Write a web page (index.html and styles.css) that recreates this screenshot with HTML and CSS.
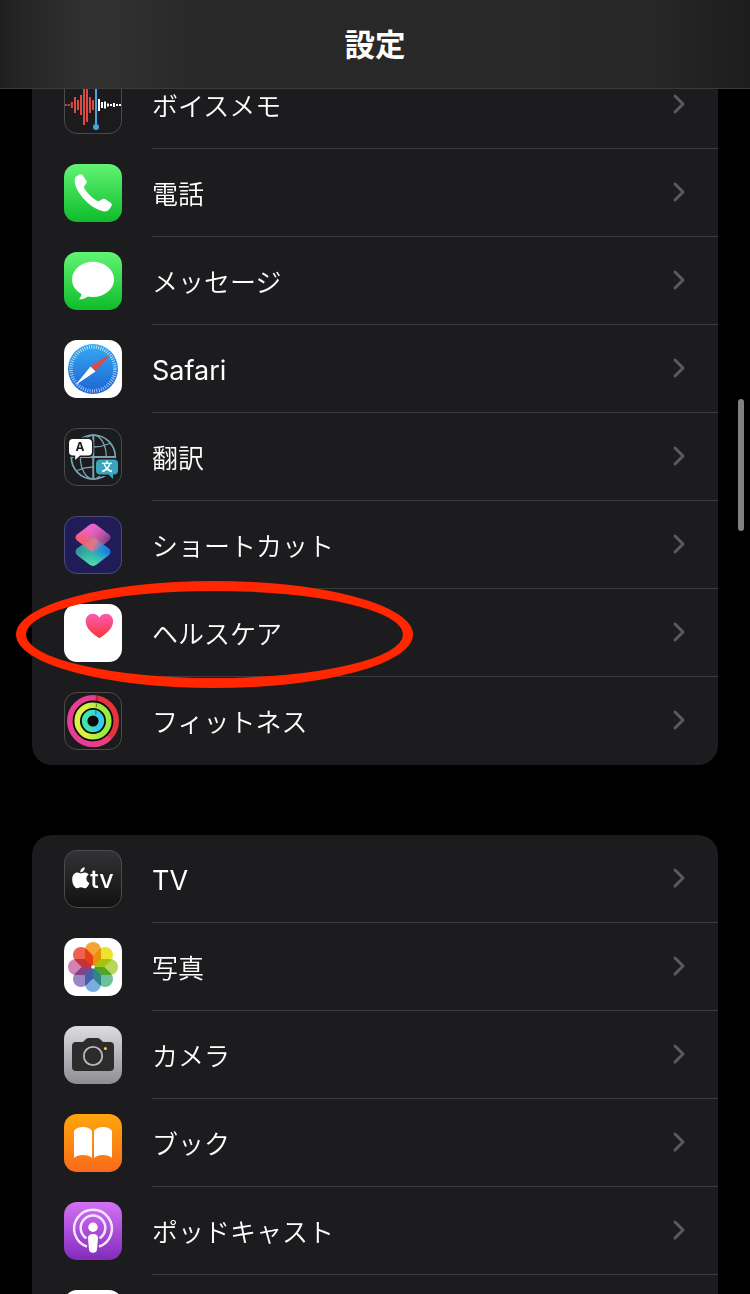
FILE: index.html
```html
<!DOCTYPE html>
<html lang="ja">
<head>
  <meta charset="UTF-8" />
  <title>設定</title>
  <link rel="stylesheet" href="styles.css">
</head>
<body>

  <header class="navbar">
    <h1>設定</h1>
  </header>

  <main class="content">
    <!-- System apps -->
    <ul class="group">
      <li class="row">
        <svg class="icon" viewBox="0 0 58 58">
          <rect width="58" height="58" rx="13" fill="#1b1b1d" />
          <g stroke="#d94b43" stroke-width="2">
            <path d="M1.6 28v2M4.7 28v2M7.9 26v6M11 21v16M14 24v10M17 19v20M20 9v40M23 12v34M26 21v16M29 24v10" />
          </g>
          <path d="M35 23v12M38 26v6M41 25.500v7M44 27.500v3M47 28v2M50 27v4M53 28v2M56 28v2" stroke="#fff" stroke-width="2" />
          <path d="M32 4v47" stroke="#4aa3dc" stroke-width="2" />
          <circle cx="32" cy="51" r="3" fill="#4aa3dc" />
          <rect class="edge" x=".5" y=".5" width="57" height="57" rx="12.500" />
        </svg>
        <div class="cell"><span>ボイスメモ</span><svg class="chevron" viewBox="0 0 14 22"><path d="M3 3l8 8-8 8" /></svg></div>
      </li>
      <li class="row">
        <svg class="icon" viewBox="0 0 58 58">
          <defs>
            <linearGradient id="green" x2="0" y2="1">
              <stop offset="0" stop-color="#62f474" />
              <stop offset="1" stop-color="#0ebc2b" />
            </linearGradient>
          </defs>
          <rect width="58" height="58" rx="13" fill="url(#green)" />
          <path fill="#fff" d="M12 12.500L16 10.300Q17.500 9.800 18.800 11.500L22.500 17Q23.300 18.500 22 20L20.300 22Q19.600 23 20.200 24.200C23 29 27.500 33.500 33 36.800Q34.500 37.600 35.600 36.800L38.500 35Q40 34.200 41.500 35.200L47 39Q48.300 40.200 47.600 41.700L45.500 45Q44 47.600 40.500 47.400C34 47 25 41 19 34C13.500 27.500 10.800 21.500 10.700 16.500Q10.700 13.500 12 12.500Z" />
        </svg>
        <div class="cell"><span>電話</span><svg class="chevron" viewBox="0 0 14 22"><path d="M3 3l8 8-8 8" /></svg></div>
      </li>
      <li class="row">
        <svg class="icon" viewBox="0 0 58 58">
          <rect width="58" height="58" rx="13" fill="url(#green)" />
          <ellipse cx="29" cy="27.400" rx="21" ry="17.600" fill="#fff" />
          <path fill="#fff" d="M17.500 40c.3 3-.7 5.500-2.500 7.300 3.500.4 7.500-1 10-4z" />
        </svg>
        <div class="cell"><span>メッセージ</span><svg class="chevron" viewBox="0 0 14 22"><path d="M3 3l8 8-8 8" /></svg></div>
      </li>
      <li class="row">
        <svg class="icon" viewBox="0 0 58 58">
          <defs>
            <linearGradient id="compass" x2="0" y2="1">
              <stop offset="0" stop-color="#35aaf0" />
              <stop offset="1" stop-color="#1d63d4" />
            </linearGradient>
          </defs>
          <rect width="58" height="58" rx="13" fill="#fff" />
          <circle cx="29" cy="29" r="25" fill="url(#compass)" />
          <circle cx="29" cy="29" r="22" fill="none" stroke="#fff" stroke-opacity=".75" stroke-width="3.500" stroke-dasharray=".8 1.504" />
          <path fill="#dd4a48" d="M46.800 13.500L26.500 26.500l5 5z" />
          <path fill="#fff" d="M11.500 45l15-18.500 5 5z" />
        </svg>
        <div class="cell"><span class="latin">Safari</span><svg class="chevron" viewBox="0 0 14 22"><path d="M3 3l8 8-8 8" /></svg></div>
      </li>
      <li class="row">
        <svg class="icon" viewBox="0 0 58 58">
          <rect width="58" height="58" rx="13" fill="#1a1c1e" />
          <g fill="none" stroke="#7ba3b3" stroke-width="1.700">
            <circle cx="29.300" cy="29" r="22" />
            <ellipse cx="29.300" cy="29" rx="13" ry="22" stroke-width="1.300" />
            <path d="M29.300 7v44M7.300 29h44" stroke-width="2" />
            <path d="M13 15.500q16 7 33 0M13 42.500q16-7 33 0" stroke-width="1.300" />
          </g>
          <path class="cutout" fill="#fff" d="M9 11h15q4 0 4 4v8.500q0 4-4 4h-8l-4.800 4.500v-4.500H9q-4 0-4-4V15q0-4 4-4z" />
          <path class="cutout" fill="#3aa5bd" d="M36 31.500h14q4 0 4 4v7q0 4-4 4h-1v4.500l-4.500-4.500H36q-4 0-4-4v-7q0-4 4-4z" />
          <text class="glyph-a" x="16" y="23.200">A</text>
          <text class="glyph-bun" x="43" y="42.800">文</text>
          <rect class="edge" x=".5" y=".5" width="57" height="57" rx="12.500" />
        </svg>
        <div class="cell"><span>翻訳</span><svg class="chevron" viewBox="0 0 14 22"><path d="M3 3l8 8-8 8" /></svg></div>
      </li>
      <li class="row">
        <svg class="icon" viewBox="0 0 58 58">
          <defs>
            <linearGradient id="layerBottom">
              <stop offset="0" stop-color="#3b8f96" />
              <stop offset=".45" stop-color="#30b5b0" />
              <stop offset="1" stop-color="#1873f0" />
            </linearGradient>
            <linearGradient id="layerGlow" x2="0" y2="1">
              <stop offset=".5" stop-color="#45d8a0" stop-opacity="0" />
              <stop offset="1" stop-color="#55dfa8" />
            </linearGradient>
            <linearGradient id="layerTop" x1="0" y1=".6" x2="1" y2=".4">
              <stop offset="0" stop-color="#fb5c5f" />
              <stop offset=".5" stop-color="#e0609b" />
              <stop offset="1" stop-color="#6a3484" />
            </linearGradient>
            <linearGradient id="layerPink" x2="0" y2="1">
              <stop offset="0" stop-color="#ee64d8" />
              <stop offset=".6" stop-color="#ee64d8" stop-opacity="0" />
            </linearGradient>
            <linearGradient id="layerFold" x1="0" y1=".3" x2="1" y2=".6">
              <stop offset="0" stop-color="#f4626c" />
              <stop offset=".55" stop-color="#d97a8c" />
              <stop offset="1" stop-color="#4a7fd8" />
            </linearGradient>
          </defs>
          <rect width="58" height="58" rx="13" fill="#1f1c58" />
          <path fill="url(#layerTop)" d="M32.500 9l12.500 9.500q3 3 0 6L32.500 34q-3.500 2.500-7 0L13 24.500q-3-3 0-6L25.500 9q3.500-2.500 7 0z" />
          <path fill="url(#layerPink)" d="M32.500 9l12.500 9.500q3 3 0 6L32.500 34q-3.500 2.500-7 0L13 24.500q-3-3 0-6L25.500 9q3.500-2.500 7 0z" />
          <path fill="url(#layerBottom)" d="M32.500 23.500l12.500 9q3 3 0 6.500l-12.500 9.500q-3.500 2.500-7 0L13 39q-3-3.500 0-6.500l12.500-9q3.500-2.500 7 0z" />
          <path fill="url(#layerGlow)" d="M32.500 23.500l12.500 9q3 3 0 6.500l-12.500 9.500q-3.500 2.500-7 0L13 39q-3-3.500 0-6.500l12.500-9q3.500-2.500 7 0z" />
          <path fill="url(#layerFold)" d="M25.500 23.500q3.500-2.500 7 0l6.500 5.200-6.500 5.300q-3.500 2.500-7 0l-6.500-5.300z" />
          <rect class="edge edge-blue" x=".5" y=".5" width="57" height="57" rx="12.500" />
        </svg>
        <div class="cell"><span>ショートカット</span><svg class="chevron" viewBox="0 0 14 22"><path d="M3 3l8 8-8 8" /></svg></div>
      </li>
      <li class="row marked">
        <svg class="icon" viewBox="0 0 58 58">
          <defs>
            <linearGradient id="heart" x2="0" y2="1">
              <stop offset="0" stop-color="#fa5cb0" />
              <stop offset="1" stop-color="#f8353a" />
            </linearGradient>
          </defs>
          <rect width="58" height="58" rx="13" fill="#fff" />
          <path fill="url(#heart)" d="M35.400 34.200C31 31.500 21.700 25.500 21.700 17.300c0-4.300 3-7.500 6.900-7.500 3 0 5.200 1.400 6.800 3.700 1.600-2.300 3.800-3.700 6.800-3.700 3.900 0 6.900 3.200 6.900 7.500 0 8.200-9.300 14.200-13.700 16.900z" />
        </svg>
        <div class="cell"><span>ヘルスケア</span><svg class="chevron" viewBox="0 0 14 22"><path d="M3 3l8 8-8 8" /></svg></div>
        <div class="circle-mark"></div>
      </li>
      <li class="row">
        <svg class="icon" viewBox="0 0 58 58">
          <defs>
            <linearGradient id="ringMove">
              <stop offset=".5" stop-color="#e83d94" />
              <stop offset=".62" stop-color="#e5323f" />
            </linearGradient>
            <linearGradient id="ringExercise">
              <stop offset=".3" stop-color="#d8f23f" />
              <stop offset=".75" stop-color="#97ee3c" />
            </linearGradient>
            <linearGradient id="ringStand">
              <stop offset=".3" stop-color="#3fe5b0" />
              <stop offset=".75" stop-color="#35cdea" />
            </linearGradient>
          </defs>
          <rect width="58" height="58" rx="13" fill="#1b1b1d" />
          <circle cx="29" cy="29" r="26" fill="#0c0809" />
          <g fill="none" stroke-width="5.600">
            <circle cx="29" cy="29" r="23.200" stroke="url(#ringMove)" />
            <path d="M29 52.200a23.200 23.200 0 0 0 16.400-6.800" stroke="#e83d80" />
            <circle cx="29" cy="29" r="15.800" stroke="url(#ringExercise)" />
            <circle cx="29" cy="29" r="8.400" stroke="url(#ringStand)" />
          </g>
          <path d="M32.500 3.500q1.500 2.500 0 5M32 11q1.500 2.300 0 4.500M31.500 19q1.200 2 0 3.500" fill="none" stroke="#000" stroke-opacity=".4" stroke-width="1.200" />
          <rect class="edge" x=".5" y=".5" width="57" height="57" rx="12.500" />
        </svg>
        <div class="cell"><span>フィットネス</span><svg class="chevron" viewBox="0 0 14 22"><path d="M3 3l8 8-8 8" /></svg></div>
      </li>
    </ul>

    <!-- Media apps -->
    <ul class="group">
      <li class="row">
        <svg class="icon" viewBox="0 0 58 58">
          <defs>
            <linearGradient id="tvBg" x2="0" y2="1">
              <stop offset="0" stop-color="#333335" />
              <stop offset="1" stop-color="#111112" />
            </linearGradient>
          </defs>
          <rect width="58" height="58" rx="13" fill="url(#tvBg)" />
          <path fill="#fff" d="M20.700 17.300c.2 2.700-1.900 5-4.400 5-.2-2.500 2-4.900 4.400-5z" />
          <path fill="#fff" d="M16.700 23.400c1.100 0 2.300-1 4.200-1 1.500 0 2.900.7 3.800 2-3.400 2.200-2.800 7 .7 8.500-.8 2.300-2.500 5.300-4.600 5.300-1.500 0-2-.9-3.800-.9s-2.400.9-3.800.9c-2.500 0-5-4.600-5-8.800 0-4.300 2.600-6.800 5.200-6.800 1.600 0 2.600.8 3.300.8z" />
          <text class="glyph-tv" x="26.300" y="37.500">tv</text>
          <rect class="edge" x=".5" y=".5" width="57" height="57" rx="12.500" />
        </svg>
        <div class="cell"><span class="latin">TV</span><svg class="chevron" viewBox="0 0 14 22"><path d="M3 3l8 8-8 8" /></svg></div>
      </li>
      <li class="row">
        <svg class="icon" viewBox="0 0 58 58">
          <rect width="58" height="58" rx="13" fill="#fff" />
          <g class="petals">
            <path d="M21 12a8 8 0 0 1 16 0v9l-8 8-8-8z" fill="#f8a33a" />
            <path d="M21 12a8 8 0 0 1 16 0v9l-8 8-8-8z" fill="#ece32f" transform="rotate(45 29 29)" />
            <path d="M21 12a8 8 0 0 1 16 0v9l-8 8-8-8z" fill="#b5d957" transform="rotate(90 29 29)" />
            <path d="M21 12a8 8 0 0 1 16 0v9l-8 8-8-8z" fill="#6cc196" transform="rotate(135 29 29)" />
            <path d="M21 12a8 8 0 0 1 16 0v9l-8 8-8-8z" fill="#76aee0" transform="rotate(180 29 29)" />
            <path d="M21 12a8 8 0 0 1 16 0v9l-8 8-8-8z" fill="#9a86c2" transform="rotate(225 29 29)" />
            <path d="M21 12a8 8 0 0 1 16 0v9l-8 8-8-8z" fill="#d383b3" transform="rotate(270 29 29)" />
            <path d="M21 12a8 8 0 0 1 16 0v9l-8 8-8-8z" fill="#ef6152" transform="rotate(315 29 29)" />
          </g>
          <circle cx="29" cy="29" r="1.800" fill="#fff" />
        </svg>
        <div class="cell"><span>写真</span><svg class="chevron" viewBox="0 0 14 22"><path d="M3 3l8 8-8 8" /></svg></div>
      </li>
      <li class="row">
        <svg class="icon" viewBox="0 0 58 58">
          <defs>
            <linearGradient id="silver" x2="0" y2="1">
              <stop offset="0" stop-color="#dddce1" />
              <stop offset="1" stop-color="#8e8d92" />
            </linearGradient>
          </defs>
          <rect width="58" height="58" rx="13" fill="url(#silver)" />
          <path fill="#2c2c2d" d="M12 16h6q1.500 0 2.500-1.500 1.500-2.500 4-2.500h9q2.500 0 4 2.500Q38.500 16 40 16h6q4 0 4 4v21q0 4-4 4H12q-4 0-4-4V20q0-4 4-4z" />
          <circle cx="29" cy="30" r="9.200" fill="none" stroke="#b9b9bc" stroke-width="1.800" />
          <circle cx="41.400" cy="22.400" r="1.500" fill="#f7c945" />
        </svg>
        <div class="cell"><span>カメラ</span><svg class="chevron" viewBox="0 0 14 22"><path d="M3 3l8 8-8 8" /></svg></div>
      </li>
      <li class="row">
        <svg class="icon" viewBox="0 0 58 58">
          <defs>
            <linearGradient id="orange" x2="0" y2="1">
              <stop offset="0" stop-color="#ffa60c" />
              <stop offset="1" stop-color="#f96a1c" />
            </linearGradient>
          </defs>
          <rect width="58" height="58" rx="13" fill="url(#orange)" />
          <path fill="#fff" d="M10 17c1.500-2.500 5-4 9-4s7.500 1.500 9 4v27c-2-2-5-3-9-3s-7 1-9 3zM30 17c1.500-2.500 5-4 9-4s7.500 1.500 9 4v27c-2-2-5-3-9-3s-7 1-9 3z" />
        </svg>
        <div class="cell"><span>ブック</span><svg class="chevron" viewBox="0 0 14 22"><path d="M3 3l8 8-8 8" /></svg></div>
      </li>
      <li class="row">
        <svg class="icon" viewBox="0 0 58 58">
          <defs>
            <linearGradient id="purple" x2="0" y2="1">
              <stop offset="0" stop-color="#d472f6" />
              <stop offset="1" stop-color="#822bbc" />
            </linearGradient>
          </defs>
          <rect width="58" height="58" rx="13" fill="url(#purple)" />
          <g fill="none" stroke="#f6e6fd" stroke-width="2.500">
            <path d="M23 44.500A18.900 18.900 0 1 1 35 44.500" />
            <path d="M22.500 36.300A12.300 12.300 0 1 1 35.500 36.300" />
          </g>
          <circle cx="29" cy="25.200" r="4.700" fill="#fff" />
          <path fill="#fff" d="M29 32c3.500 0 5.200 1.500 5 4.500l-1 11q-.4 3.300-4 3.300t-4-3.300l-1-11c-.2-3 1.500-4.500 5-4.500z" />
        </svg>
        <div class="cell"><span>ポッドキャスト</span><svg class="chevron" viewBox="0 0 14 22"><path d="M3 3l8 8-8 8" /></svg></div>
      </li>
      <li class="row">
        <svg class="icon" viewBox="0 0 58 58">
          <rect width="58" height="58" rx="13" fill="#fff" />
        </svg>
        <div class="cell"></div>
      </li>
    </ul>
  </main>

  <div class="scrollbar"></div>

</body>
</html>
```
FILE: styles.css
```css
* {
  box-sizing: border-box;
}

body {
  margin: 0;
  height: 1294px;
  overflow: hidden;
  display: flex;
  flex-direction: column;
  background: #000;
  color: #fff;
  font-family: "Noto Sans CJK JP", sans-serif;
}

.navbar {
  flex: none;
  height: 89px;
  display: flex;
  align-items: center;
  justify-content: center;
  background: linear-gradient(90deg, #1f1f1f 0, #262626 25px, #303030 80px, #313131 110px, #292929 190px, #282828 640px, #1d1d1d 750px);
  border-bottom: 1px solid #3a3a3b;
  z-index: 1;
}

.navbar h1 {
  margin: 0;
  padding-bottom: 2px;
  font-size: 30.5px;
  font-weight: 700;
  line-height: 1;
}

/* List starts scrolled under the navbar */
.content {
  flex: 1;
  min-height: 0;
  padding: 0 32px;
}

.group {
  list-style: none;
  margin: 0 0 70px;
  padding: 0;
  background: #1c1c1e;
  border-radius: 20px;
}

.group:first-child {
  margin-top: -28px;
}

.row {
  display: flex;
  align-items: center;
  height: 88px;
  padding-left: 32px;
}

.icon {
  flex: none;
  width: 58px;
  height: 58px;
  margin-right: 30px;
}

.cell {
  flex: 1;
  height: 88px;
  display: flex;
  align-items: center;
  justify-content: space-between;
  padding-right: 32px;
  border-bottom: 1px solid #3b3b3e;
  font-size: 26px;
  font-weight: 350;
  line-height: 28px;
}

.row:last-child .cell {
  border-color: transparent;
}

.latin {
  font-family: Inter, sans-serif;
  font-size: 27px;
  font-weight: 400;
  padding-top: 4px;
}

.chevron {
  width: 14px;
  height: 22px;
  margin-bottom: 1px;
}

.chevron path {
  fill: none;
  stroke: #5b5b5f;
  stroke-width: 3;
  stroke-linecap: round;
  stroke-linejoin: round;
}

.edge {
  fill: none;
  stroke: #4b4b4e;
}

.edge-blue {
  stroke: #4b4a78;
}

.cutout {
  stroke: #1a1c1e;
  stroke-width: 3;
  paint-order: stroke;
}

.glyph-a {
  font: 700 12px Inter, sans-serif;
  text-anchor: middle;
  fill: #1a1c1e;
}

.glyph-bun {
  font: 700 11px "Noto Sans CJK JP", sans-serif;
  text-anchor: middle;
  fill: #fff;
}

.glyph-tv {
  font: 500 25px Inter, sans-serif;
  fill: #fff;
}

.petals path {
  mix-blend-mode: multiply;
}

/* Hand-drawn style marker around one row */
.marked {
  position: relative;
}

.circle-mark {
  position: absolute;
  left: -16px;
  top: -8px;
  width: 397px;
  height: 107px;
  border: 10px solid #ff2600;
  border-radius: 50%;
}

.scrollbar {
  position: absolute;
  top: 399px;
  right: 6px;
  width: 6px;
  height: 132px;
  border-radius: 3px;
  background: #808080;
}
```
